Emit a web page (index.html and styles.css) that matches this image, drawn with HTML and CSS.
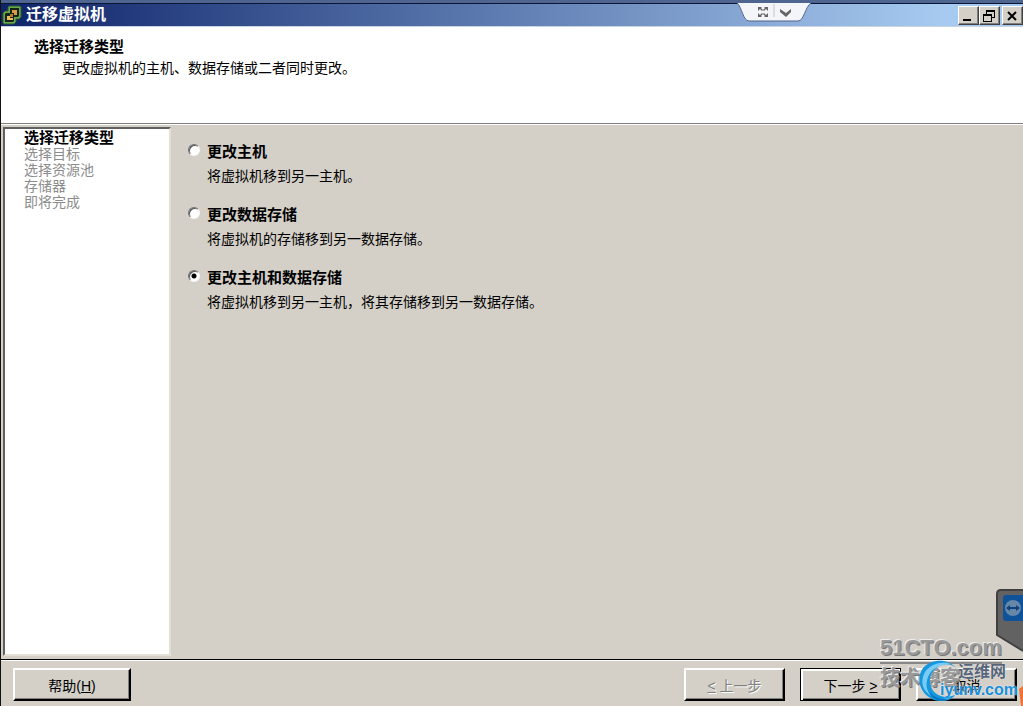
FILE: index.html
```
<!DOCTYPE html>
<html lang="zh-CN">
<head>
    <meta charset="UTF-8">
    <meta name="viewport" content="width=device-width, initial-scale=1.0">
    <title>迁移虚拟机</title>
    <link rel="stylesheet" href="styles.css">
</head>
<body>
    <div class="window">
        <div class="title-bar">
            <svg class="app-icon" width="20" height="20" viewBox="0 0 20 20">
                <path d="M7 1h11l1 1v10l-2 2h-3v3l-2 2H2l-1-1V8l2-2h3V2z" fill="#69a84f" stroke="#2f5a2a"/>
                <path d="M8 3h9v8l-1 1h-4v4l-1 1H3V9l1-1h4z" fill="#14241a"/>
                <path d="M10 5h5v5h-3V8h-2z" fill="#d99a4a"/>
                <path d="M5 11h3v2h3v2H5z" fill="#f0b95c"/>
                <path d="M8 9h3v3H8z" fill="#b87a38"/>
            </svg>
            <h1 class="title">迁移虚拟机</h1>
            <div class="window-buttons">
                <button class="window-button" type="button" aria-label="最小化">
                    <svg width="18" height="16" viewBox="0 0 18 16"><path d="M4 11h8v2H4z"/></svg>
                </button>
                <button class="window-button" type="button" aria-label="还原">
                    <svg width="18" height="16" viewBox="0 0 18 16"><path d="M6 2h9v8h-3V9h2V4H7v2H6zM3 6h9v8H3zM4 8v5h7V8z" fill-rule="evenodd"/></svg>
                </button>
                <button class="window-button close" type="button" aria-label="关闭">
                    <svg width="18" height="16" viewBox="0 0 18 16"><path d="M5 4l8 8M13 4l-8 8" stroke="#000" stroke-width="2"/></svg>
                </button>
            </div>
        </div>

        <!-- remote session tab -->
        <div class="session-tab">
            <svg width="76" height="20" viewBox="0 0 76 20">
                <path d="M1 0C6 4 7 18 13 18H62C68 18 69 4 75 0" fill="#f4f5f8" stroke="#53658c"/>
                <path d="M22 4h4l-1 1 2 2-1 1-2-2-2 2zM32 4h-4l1 1-2 2 1 1 2-2 2 2zM22 14h4l-1-1 2-2-1-1-2 2-2-2zM32 14h-4l1-1-2-2 1-1 2 2 2-2z" fill="#666"/>
                <path d="M38 1v13" stroke="#c4c4c8"/>
                <path d="M44 6l6 4 5-4v3l-5 5-6-5z" fill="#666"/>
            </svg>
        </div>

        <header class="header">
            <h2 class="header-title">选择迁移类型</h2>
            <p class="header-text">更改虚拟机的主机、数据存储或二者同时更改。</p>
        </header>

        <div class="content">
            <ul class="steps">
                <li class="current">选择迁移类型</li>
                <li>选择目标</li>
                <li>选择资源池</li>
                <li>存储器</li>
                <li>即将完成</li>
            </ul>

            <form class="options">
                <div class="option">
                    <input type="radio" name="type" id="host">
                    <label for="host">更改主机</label>
                    <p>将虚拟机移到另一主机。</p>
                </div>
                <div class="option">
                    <input type="radio" name="type" id="storage">
                    <label for="storage">更改数据存储</label>
                    <p>将虚拟机的存储移到另一数据存储。</p>
                </div>
                <div class="option">
                    <input type="radio" name="type" id="both" checked>
                    <label for="both">更改主机和数据存储</label>
                    <p>将虚拟机移到另一主机，将其存储移到另一数据存储。</p>
                </div>
            </form>
        </div>

        <footer class="footer">
            <button class="button help" type="button">帮助(<u>H</u>)</button>
            <button class="button" type="button" disabled><u>&lt;</u> 上一步</button>
            <button class="button default" type="button">下一步 <u>&gt;</u></button>
            <button class="button" type="button">取消</button>
        </footer>

        <!-- TeamViewer side tab -->
        <div class="side-tab">
            <svg width="27" height="64" viewBox="0 0 27 64">
                <path d="M27 1H5Q1 1 1 5V46L27 62" fill="#626262" stroke="#404040" stroke-width="2"/>
                <rect x="7" y="6" width="22" height="26" rx="3" fill="#10529a"/>
                <circle cx="17" cy="19" r="8" fill="#6687a8"/>
                <path d="M10 19l4-3v2h6v-2l4 3-4 3v-2h-6v2z" fill="#10417c"/>
            </svg>
        </div>

        <div class="watermark">
            <div class="mark-site">51CTO.com</div>
            <div class="mark-blog">技术博客</div>
        </div>
        <div class="logo">
            <svg class="logo-ring" width="44" height="44" viewBox="0 0 44 44">
                <path d="M38 9C31 0 15-1 6 8C-3 18 1 35 16 41C28 44 34 40 37 36C27 40 18 37 14 30C8 18 16 9 23 6C30 4 35 6 38 9z" fill="#1598df"/>
                <path d="M7 13C13 4 25 2 33 5C22 5 13 10 10 18C7 26 9 32 13 37C4 31 2 22 7 13z" fill="#79cdf5"/>
                <path d="M11 32C15 38 22 41 31 40C22 44 14 41 11 32z" fill="#0874be"/>
            </svg>
            <div class="logo-name">运维网</div>
            <div class="logo-url">iyunv.com</div>
        </div>
        <div class="corner-mark"></div>
    </div>
</body>
</html>
```

FILE: styles.css
```
* {
    margin: 0;
    padding: 0;
    box-sizing: border-box;
}

body {
    font-family: "Liberation Sans", "Noto Sans CJK SC", sans-serif;
    font-size: 14px;
    line-height: 16px;
    color: #000;
    background-color: #d4d0c8;
}

.window {
    position: relative;
    display: flex;
    flex-direction: column;
    min-height: 100vh;
    overflow: hidden;
    border-left: 1px solid #111;
}

.title-bar {
    display: flex;
    align-items: center;
    height: 27px;
    padding-left: 1px;
    border-top: 3px solid #4e6590;
    border-bottom: 1px solid #c8d4e4;
    background: linear-gradient(to right, #0e246a, #a6caf0 92%);
    box-shadow: inset 0 1px #0b1434;
}

.title {
    margin-left: 4px;
    color: #fff;
    font-size: 16px;
    line-height: 20px;
}

.window-buttons {
    display: flex;
    margin-left: auto;
    padding-top: 2px;
}

.window-button {
    width: 21px;
    height: 19px;
    background-color: #d4d0c8;
    border: 1px solid;
    border-color: #fff #404040 #404040 #fff;
    box-shadow: inset -1px -1px #808080;
}

.window-button svg {
    display: block;
}

.window-button.close {
    margin-left: 2px;
}

.session-tab {
    position: absolute;
    top: 3px;
    right: 211px;
}

.header {
    height: 97px;
    padding: 11px 33px;
    background-color: #fff;
    border-bottom: 1px solid #808080;
}

.header-title {
    font-size: 15px;
    line-height: 18px;
}

.header-text {
    margin-top: 4px;
    padding-left: 28px;
}

.content {
    display: flex;
    flex: 1;
    padding: 2px 2px 3px;
    border-top: 1px solid #fff;
}

.steps {
    width: 168px;
    padding: 1px 0 0 19px;
    list-style: none;
    color: #8c8c8c;
    background-color: #fff;
    border: 2px solid;
    border-color: #606060 #e4e0d8 #e4e0d8 #606060;
}

.steps .current {
    color: #000;
    font-size: 15px;
    font-weight: bold;
}

.options {
    flex: 1;
    padding: 16px 17px;
}

.option {
    display: grid;
    grid-template-columns: 12px 1fr;
    column-gap: 7px;
    row-gap: 7px;
    margin-bottom: 22px;
}

.option input {
    appearance: none;
    width: 12px;
    height: 12px;
    margin-top: 1px;
    border: 1px solid;
    border-color: #707070 #f4f4f4 #f4f4f4 #707070;
    border-radius: 50%;
    background-color: #fff;
    box-shadow: inset 1px 1px #555;
}

.option input:checked {
    background-image: radial-gradient(circle, #000 2px, transparent 3px);
}

.option label {
    font-size: 15px;
    line-height: 18px;
    font-weight: bold;
}

.option p {
    grid-column: 2;
}

.footer {
    display: flex;
    gap: 15px;
    padding: 8px 6px 5px 12px;
    border-top: 1px solid #000;
    box-shadow: inset 0 1px #fff;
}

.button {
    width: 101px;
    height: 33px;
    font-family: inherit;
    font-size: 14px;
    color: #000;
    background-color: #d4d0c8;
    border: 2px solid;
    border-color: #fff #000 #000 #fff;
    box-shadow: inset -1px -1px #808080;
}

.button.help {
    width: 118px;
    margin-right: auto;
}

.button.default {
    border: 1px solid #000;
    box-shadow: inset 2px 2px #fff, inset -1px -1px #000, inset -2px -2px #808080;
}

.button:disabled {
    color: #808080;
    text-shadow: 1px 1px #fff;
}

.side-tab {
    position: absolute;
    right: 0;
    bottom: 53px;
}

.side-tab svg {
    display: block;
}

.watermark {
    position: absolute;
    right: 21px;
    bottom: 14px;
    width: 122px;
    color: #999;
    font-weight: bold;
    text-shadow: -1px -1px #eee, 1px 1px #777;
}

.mark-site {
    font-size: 22px;
    line-height: 28px;
    border-bottom: 2px solid #888;
}

.mark-blog {
    font-size: 20px;
    line-height: 28px;
}

.logo {
    position: absolute;
    right: 5px;
    bottom: 3px;
    width: 100px;
    height: 44px;
    font-weight: bold;
}

.logo-ring {
    position: absolute;
    left: 0;
    top: 0;
}

.logo-name {
    position: absolute;
    right: 12px;
    top: 3px;
    color: #566579;
    font-size: 16px;
    line-height: 20px;
    text-shadow: 0 0 1px #fff;
}

.logo-url {
    position: absolute;
    right: 0;
    bottom: 3px;
    color: #168fdb;
    font-size: 16px;
    line-height: 20px;
    text-shadow: 0 0 2px #fff;
}

.corner-mark {
    position: absolute;
    right: 0;
    bottom: 0;
    width: 4px;
    height: 20px;
    background-color: #ee743b;
    clip-path: polygon(0 15%, 100% 0, 100% 100%, 50% 100%);
}
```
